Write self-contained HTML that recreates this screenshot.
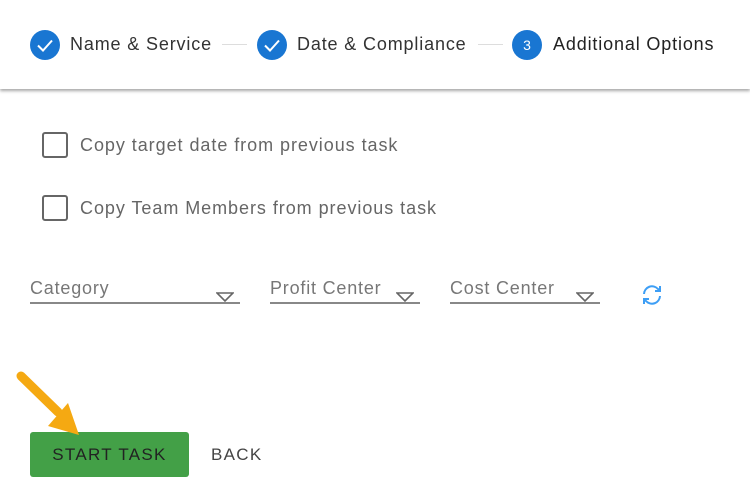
<!DOCTYPE html>
<html><head><style>
body{margin:0;width:750px;height:497px;background:#fff;font-family:"Liberation Sans",sans-serif;position:relative;overflow:hidden}
.hdr{position:absolute;left:0;top:0;width:750px;height:89px;background:#fff;box-shadow:0 2px 3px rgba(0,0,0,.35)}
.t{position:absolute;font-size:18px;color:#333;white-space:nowrap;letter-spacing:0.85px}
.c{position:absolute;width:30px;height:30px;border-radius:50%;background:#1976d2;top:30px}
.ln{position:absolute;top:44px;height:1px;background:#ddd}
.cb{position:absolute;left:42px;width:22px;height:22px;border:2px solid #666;border-radius:3px}
.lbl{position:absolute;font-size:18px;color:#666;white-space:nowrap;letter-spacing:0.95px}
.sel{position:absolute;top:278px;border-bottom:2px solid #888;height:24px;font-size:18px;color:#777;letter-spacing:0.8px}
.tri{position:absolute;right:6px;top:14px}
</style></head><body>
<div class="hdr">
<div class="c" style="left:30px"><svg width="30" height="30"><path d="M8 15.5l5 5 9-10" stroke="#fff" stroke-width="2" fill="none"/></svg></div>
<div class="t" style="left:70px;top:34px">Name &amp; Service</div>
<div class="ln" style="left:222px;width:25px"></div>
<div class="c" style="left:257px"><svg width="30" height="30"><path d="M8 15.5l5 5 9-10" stroke="#fff" stroke-width="2" fill="none"/></svg></div>
<div class="t" style="left:297px;top:34px">Date &amp; Compliance</div>
<div class="ln" style="left:478px;width:25px"></div>
<div class="c" style="left:512px;color:#fff;font-size:14px;text-align:center;line-height:30px">3</div>
<div class="t" style="left:553px;top:34px;color:#222">Additional Options</div>
</div>
<div class="cb" style="top:132px"></div><div class="lbl" style="left:80px;top:135px">Copy target date from previous task</div>
<div class="cb" style="top:195px"></div><div class="lbl" style="left:80px;top:198px">Copy Team Members from previous task</div>
<div class="sel" style="left:30px;width:210px">Category<svg class="tri" width="18" height="10"><path d="M1 1h16l-8 8z" fill="none" stroke="#666" stroke-width="1.6"/></svg></div>
<div class="sel" style="left:270px;width:150px">Profit Center<svg class="tri" width="18" height="10"><path d="M1 1h16l-8 8z" fill="none" stroke="#666" stroke-width="1.6"/></svg></div>
<div class="sel" style="left:450px;width:150px">Cost Center<svg class="tri" width="18" height="10"><path d="M1 1h16l-8 8z" fill="none" stroke="#666" stroke-width="1.6"/></svg></div>
<svg style="position:absolute;left:640px;top:283px" width="24" height="24" viewBox="0 0 24 24"><path d="M4 11a8 8 0 0 1 14-5l2 2M20 13a8 8 0 0 1-14 5l-2-2" fill="none" stroke="#3d9ef5" stroke-width="2"/><path d="M20 3v5h-5M4 21v-5h5" fill="none" stroke="#3d9ef5" stroke-width="2"/></svg>
<div style="position:absolute;left:30px;top:432px;width:159px;height:45px;background:#43a047;border-radius:3px;color:#222;font-size:17px;letter-spacing:1.3px;text-align:center;line-height:45px">START TASK</div>
<div style="position:absolute;left:211px;top:432px;height:45px;line-height:45px;font-size:17px;letter-spacing:1.3px;color:#444">BACK</div>
<svg style="position:absolute;left:0;top:360px" width="100" height="90"><path d="M21 16L58 52" stroke="#f5a912" stroke-width="9" stroke-linecap="round"/><path d="M48 66L79 75 68 43z" fill="#f5a912"/></svg>
</body></html>
